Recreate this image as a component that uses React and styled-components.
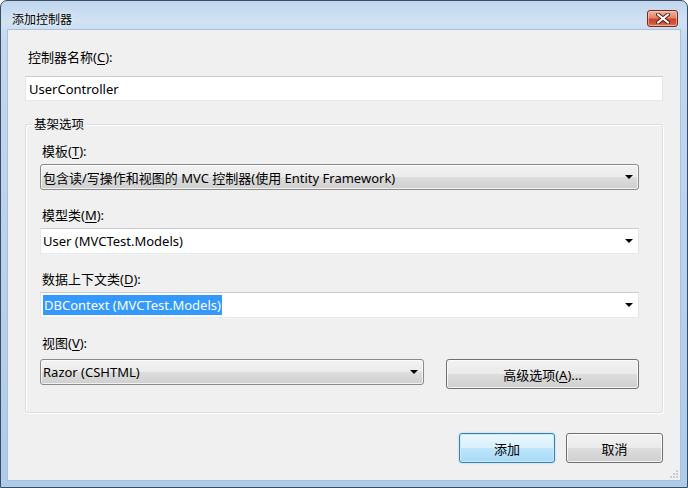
import React from "react";
import styled, { createGlobalStyle } from "styled-components";

const GlobalStyle = createGlobalStyle`
  html, body {
    margin: 0;
    padding: 0;
    background: #ffffff;
  }
  body {
    font-family: "Noto Sans", "Noto Sans CJK SC", sans-serif;
    font-size: 13px;
    color: #000;
  }
`;

const Key = ({ children }) => <u>{children}</u>;

const App = () => {
  return (
    <>
      <GlobalStyle />
      <Window>
        <TitleBar>
          <Title>添加控制器</Title>
          <CloseButton aria-label="关闭">
            <svg width="14" height="11" viewBox="0 0 14 11">
              <path d="M2 1.5 L12 9.5 M12 1.5 L2 9.5" stroke="#5a1a10" strokeWidth="4" strokeLinecap="round" />
              <path d="M2 1.5 L12 9.5 M12 1.5 L2 9.5" stroke="#ffffff" strokeWidth="2.2" strokeLinecap="round" />
            </svg>
          </CloseButton>
        </TitleBar>

        <Client>
          <Label indent="3px">
            控制器名称(<Key>C</Key>):
          </Label>
          <TextBox>UserController</TextBox>

          <GroupBox>
            <Legend>基架选项</Legend>

            <Field>
              <Label>
                模板(<Key>T</Key>):
              </Label>
              <Combo variant="list">
                包含读/写操作和视图的 MVC 控制器(使用 Entity Framework)
                <Arrow />
              </Combo>
            </Field>

            <Field>
              <Label>
                模型类(<Key>M</Key>):
              </Label>
              <Combo>
                User (MVCTest.Models)
                <Arrow />
              </Combo>
            </Field>

            <Field>
              <Label>
                数据上下文类(<Key>D</Key>):
              </Label>
              <Combo>
                <Selected>DBContext (MVCTest.Models)</Selected>
                <Arrow />
              </Combo>
            </Field>

            <Field>
              <Label spaced>
                视图(<Key>V</Key>):
              </Label>
              <ViewRow>
                <Combo variant="list" width="384px">
                  Razor (CSHTML)
                  <Arrow />
                </Combo>
                <Button width="193px">
                  高级选项(<Key>A</Key>)...
                </Button>
              </ViewRow>
            </Field>
          </GroupBox>

          <Footer>
            <Button primary width="96px">添加</Button>
            <Button width="97px">取消</Button>
          </Footer>

          <Grip width="10" height="10" viewBox="0 0 10 10">
            <rect x="7" y="1" width="2" height="2" fill="#c8cdd3" />
            <rect x="4" y="4" width="2" height="2" fill="#c8cdd3" />
            <rect x="7" y="4" width="2" height="2" fill="#c8cdd3" />
            <rect x="1" y="7" width="2" height="2" fill="#c8cdd3" />
            <rect x="4" y="7" width="2" height="2" fill="#c8cdd3" />
            <rect x="7" y="7" width="2" height="2" fill="#c8cdd3" />
          </Grip>
        </Client>
      </Window>
    </>
  );
};

const Window = styled.div`
  width: 688px;
  height: 488px;
  box-sizing: border-box;
  display: flex;
  flex-direction: column;
  border: 1px solid #3b4d63;
  border-radius: 7px 7px 0 0;
  background: linear-gradient(
    to bottom,
    #c0d6ee 0px,
    #d2e2f3 20px,
    #c2d8f0 40px,
    #afcbea 100%
  );
  overflow: hidden;
`;

const TitleBar = styled.div`
  height: 29px;
  box-sizing: border-box;
  display: flex;
  align-items: center;
  justify-content: space-between;
  padding: 5px 9px 0 11px;
`;

const Title = styled.span`
  font-family: "Noto Sans CJK SC", sans-serif;
  font-size: 12px;
  color: #000;
  text-shadow: 0 0 6px rgba(255, 255, 255, 0.9);
`;

const CloseButton = styled.div`
  width: 31px;
  height: 17px;
  box-sizing: border-box;
  display: flex;
  align-items: center;
  justify-content: center;
  border: 1px solid #7a2a1c;
  border-radius: 3px;
  background: linear-gradient(
    to bottom,
    #eeb4a2 0%,
    #e0846a 45%,
    #c9442a 55%,
    #d05a3c 85%,
    #e3896c 100%
  );
  box-shadow: inset 0 0 0 1px rgba(255, 210, 200, 0.55);
`;

const Client = styled.div`
  position: relative;
  flex: 1;
  margin: 0 7px 7px;
  padding: 19px 17px 0 17px;
  background: #f0f0f0;
  box-shadow: 0 0 0 1px #a9c1dc;
  display: flex;
  flex-direction: column;
`;

const Label = styled.div`
  font-size: 13px;
  line-height: 16px;
  margin-left: ${({ indent }) => indent || "2px"};
  margin-bottom: ${({ indent, spaced }) =>
    indent ? "11px" : spaced ? "8px" : "5px"};

  u {
    text-underline-offset: 2px;
  }
`;

const TextBox = styled.div`
  height: 25px;
  box-sizing: border-box;
  padding: 0 3px;
  display: flex;
  align-items: center;
  background: #fff;
  border: 1px solid;
  border-color: #c5c9d0 #e2e5ea #e6e9ee #e2e5ea;
`;

const GroupBox = styled.div`
  position: relative;
  margin-top: 23px;
  padding: 18px 23px 23px 14px;
  border: 1px solid #d5dfe5;
  border-radius: 3px;
  box-shadow: inset 1px 1px 0 #fff, 1px 1px 0 #fff;
  display: flex;
  flex-direction: column;
  gap: 17px;
`;

const Legend = styled.span`
  position: absolute;
  top: -9px;
  left: 6px;
  padding: 0 2px;
  background: #f0f0f0;
  font-family: "Noto Sans CJK SC", sans-serif;
  font-size: 12.5px;
  line-height: 16px;
`;

const Field = styled.div`
  display: flex;
  flex-direction: column;
`;

const Combo = styled.div`
  position: relative;
  width: ${({ width }) => width || "auto"};
  height: 26px;
  box-sizing: border-box;
  padding: 0 20px 0 2px;
  display: flex;
  align-items: center;
  white-space: nowrap;
  ${({ variant }) =>
    variant === "list"
      ? `
    border: 1px solid #8a8a8a;
    border-radius: 3px;
    background: linear-gradient(to bottom, #f2f2f2 0%, #ebebeb 50%, #dddddd 51%, #cfcfcf 100%);
    box-shadow: inset 0 0 0 1px rgba(255, 255, 255, 0.7);
  `
      : `
    border: 1px solid;
    border-color: #c5c9d0 #e2e5ea #e6e9ee #e2e5ea;
    background: #fff;
  `}
`;

const Arrow = styled.span`
  position: absolute;
  right: 5px;
  top: 50%;
  margin-top: -2px;
  width: 0;
  height: 0;
  border-left: 4px solid transparent;
  border-right: 4px solid transparent;
  border-top: 4px solid #000;
`;

const Selected = styled.span`
  background: #3399ff;
  color: #fff;
  padding: 2px 1px;
  line-height: 16px;
`;

const ViewRow = styled.div`
  display: flex;
  align-items: flex-start;
  gap: 22px;
`;

const Button = styled.button`
  width: ${({ width }) => width};
  height: 30px;
  box-sizing: border-box;
  padding: 0;
  font-family: "Noto Sans", "Noto Sans CJK SC", sans-serif;
  font-size: 13px;
  color: #000;
  border-radius: 3px;
  border: 1px solid ${({ primary }) => (primary ? "#3c7fb1" : "#707070")};
  background: ${({ primary }) =>
    primary
      ? "linear-gradient(to bottom, #eaf6fd 0%, #d9f0fc 50%, #bee6fd 51%, #a7d9f5 100%)"
      : "linear-gradient(to bottom, #f2f2f2 0%, #ebebeb 50%, #dddddd 51%, #cfcfcf 100%)"};
  box-shadow: ${({ primary }) =>
    primary
      ? "inset 0 0 0 1px #c8ecfc, 0 0 2px #8fd0f5"
      : "inset 0 0 0 1px rgba(255, 255, 255, 0.75)"};

  u {
    text-underline-offset: 2px;
  }
`;

const Footer = styled.div`
  margin-top: 20px;
  display: flex;
  justify-content: flex-end;
  gap: 11px;
`;

const Grip = styled.svg`
  position: absolute;
  right: 1px;
  bottom: 1px;
`;

export default App;
